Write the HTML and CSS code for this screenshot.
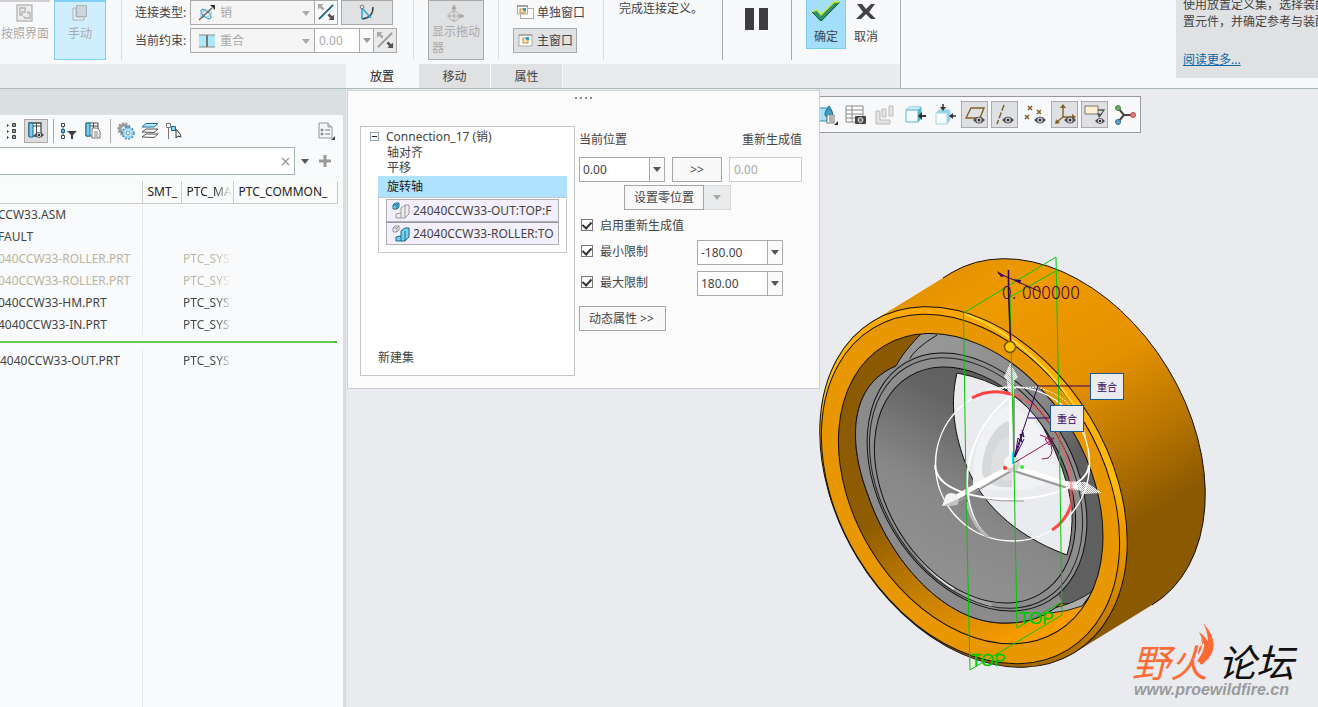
FILE: index.html
```html
<!DOCTYPE html>
<html lang="zh-CN">
<head>
<meta charset="utf-8">
<meta name="viewport" content="width=device-width, initial-scale=1">
<title>元件放置</title>
<link rel="stylesheet" href="styles.css">
</head>
<body>
<svg class="defs" aria-hidden="true">
  <defs>
    <symbol id="caret" viewBox="0 0 8 5"><path d="M0 0h8L4 5z" fill="currentColor"/></symbol>
    <symbol id="eye" viewBox="0 0 12 8"><path d="M0 4Q6-3 12 4Q6 11 0 4z" fill="#4b4b4d"/><circle cx="6" cy="4" r="2.6" fill="#e4e5e7"/><circle cx="6" cy="4" r="1.5" fill="#333"/></symbol>
    <symbol id="flip" viewBox="0 0 20 20"><path d="M2 17L17 2" stroke="currentColor" stroke-width="2"/><path d="M1 1h6L5 3l3 3-2 2-3-3-2 2z" fill="#aaa"/><path d="M18 18h-6l2-2-3-3 2-2 3 3 2-2z" class="flip-head"/></symbol>
  </defs>
</svg>

<header class="ribbon">
  <div class="ribbon-left">
    <div class="groups">
      <div class="group group-mode">
        <button class="big-btn muted-top" disabled>
          <svg width="18" height="18" viewBox="0 0 18 18" fill="none" stroke="#b3b3b3" stroke-width="1.3"><rect x="1" y="1" width="15" height="16" fill="#ececee"/><path d="M4 4h5v4H6v3H4zM8 14h6V9h-2V7M8 14v-2"/></svg>
          <span>按照界面</span>
        </button>
        <button class="big-btn picked" disabled>
          <svg width="18" height="18" viewBox="0 0 18 18"><path d="M2 4h3v9h8v3H2z" fill="#e8eef2" stroke="#aab2b8"/><rect x="5.500" y="1.500" width="10" height="11" fill="#ccd5da" stroke="#aab2b8"/></svg>
          <span>手动</span>
        </button>
      </div>
      <div class="group group-type">
        <div class="field-row">
          <label for="ctype">连接类型:</label>
          <div class="combo combo-icon">
            <svg class="lead" width="18" height="16" viewBox="0 0 18 16" fill="none"><ellipse cx="8" cy="9" rx="6" ry="3" transform="rotate(40 8 9)" stroke="#3aa0cc" stroke-width="1.300"/><ellipse cx="8" cy="9" rx="6" ry="3" transform="rotate(-15 8 9)" stroke="#a7c5d3"/><path d="M1 15L14 3" stroke="#666" stroke-width="1.500"/><path d="M17 0v5l-5-5z" fill="#333"/></svg>
            <select id="ctype" disabled><option>销</option></select>
            <svg class="caret" width="8" height="5"><use href="#caret"/></svg>
          </div>
          <button class="sq-btn flip-on" aria-label="反向"><svg width="19" height="19"><use href="#flip"/></svg></button>
          <button class="wide-btn" aria-label="曲线"><svg width="18" height="18" viewBox="0 0 18 18" fill="none"><path d="M15 3Q15 14 4 15" stroke="#444" stroke-width="1.500"/><path d="M4 15V4l9 10" stroke="#33a5dc" stroke-width="1.600"/><circle cx="4" cy="3" r="1.800" fill="#eee" stroke="#777"/></svg></button>
        </div>
        <div class="field-row">
          <label for="cons">当前约束:</label>
          <div class="combo combo-icon">
            <svg class="lead" width="18" height="14" viewBox="0 0 18 14"><path d="M1 1h16v12H1z" fill="#aee6fa"/><path d="M1 1h16M1 13h16" stroke="#888"/><path d="M9 1v12" stroke="#777" stroke-width="2"/></svg>
            <select id="cons" disabled><option>重合</option></select>
            <svg class="caret" width="8" height="5"><use href="#caret"/></svg>
          </div>
          <input class="offset" aria-label="偏移" value="0.00" disabled>
          <button class="drop-btn" aria-label="偏移列表" disabled><svg width="8" height="5"><use href="#caret"/></svg></button>
          <button class="sq-btn flip-off" aria-label="反向约束" disabled><svg width="19" height="19"><use href="#flip"/></svg></button>
        </div>
      </div>
      <div class="group group-drag">
        <button class="drag-btn" disabled>
          <svg width="18" height="18" viewBox="0 0 18 18" fill="none" stroke="#aaa"><circle cx="7" cy="11" r="5"/><path d="M7 2v15M0 11h15"/><path d="M7 0l2 4H5zM17 11l-4-2v4z" fill="#aaa"/></svg>
          <span>显示拖动器</span>
        </button>
      </div>
      <div class="group group-window">
        <button class="win-btn">
          <svg width="17" height="15" viewBox="0 0 17 15"><rect x="3.500" y="3.500" width="13" height="10" fill="#fff" stroke="#aaa"/><rect x=".5" y="1" width="10" height="8" fill="#fff" stroke="#aaa"/><path d="M0 1h11" stroke="#777"/><rect x="3" y="4" width="5" height="4" fill="#ffe6ae" stroke="#bb8a45"/><path d="M6 3h3v3H6z" fill="#2c9fc9"/></svg>
          <span>单独窗口</span>
        </button>
        <button class="win-btn on">
          <svg width="17" height="15" viewBox="0 0 17 15"><rect x="2" y="2" width="13" height="11" fill="#fff" stroke="#aaa"/><path d="M2 2h13" stroke="#888"/><rect x="6" y="5" width="5" height="5" fill="#ffe6ae" stroke="#bb8a45"/><path d="M9 4h3v3H9z" fill="#2c9fc9"/></svg>
          <span>主窗口</span>
        </button>
      </div>
      <div class="group group-status">完成连接定义。</div>
      <div class="group group-pause">
        <button class="plain" aria-label="暂停"><svg width="24" height="22" viewBox="0 0 24 22" fill="#3d3d3f"><path d="M0 0h9v22H0zM14 0h9v22h-9z"/></svg></button>
      </div>
      <div class="group group-done">
        <button class="done-btn ok">
          <svg width="30" height="22" viewBox="0 0 30 22"><path d="M1 12l5-2 4 5L24 2h5L11 21H9z" fill="#2e9368"/><path d="M1 12l5-2 4 5L23 2h5" fill="none" stroke="#d3ea27" stroke-width="1.300"/><path d="M1 12l9 9L28 3" fill="none" stroke="#24583e"/></svg>
          <span>确定</span>
        </button>
        <button class="done-btn">
          <svg width="30" height="22" viewBox="0 0 30 22"><path d="M6 4h5l4 5 5-5h4l-6 8 7 7h-5l-5-5-5 5H5l7-7z" fill="#434345"/></svg>
          <span>取消</span>
        </button>
      </div>
    </div>
    <nav class="tabs">
      <button class="tab active">放置</button>
      <button class="tab">移动</button>
      <button class="tab">属性</button>
    </nav>
  </div>
  <aside class="help">
    <p>使用放置定义集，选择装配<br>置元件，并确定参考与装配</p>
    <a href="#more">阅读更多...</a>
  </aside>
</header>

<main class="work">
  <section class="tree">
    <div class="tree-title"></div>
    <div class="tree-body">
      <div class="tree-tools">
        <button class="tool first" aria-label="列表"><svg width="16" height="18" viewBox="0 0 16 18"><path d="M9.500 1.500h3v3h-3zM9.500 7.500h3v3h-3zM9.500 13.500h3v3h-3z" fill="#999" stroke="#444"/><path d="M4 2v3l2-1.500zM4 8v3l2-1.500zM4 14v3l2-1.500z" fill="#333"/></svg></button>
        <button class="tool pressed" aria-label="树列"><svg width="18" height="18" viewBox="0 0 18 18"><path d="M2 1h12v13H2z" fill="#fff" stroke="#4a4a4a" stroke-width="1.300"/><path d="M2 4h12M9.500 1v13" stroke="#4a4a4a"/><path d="M2 1h4v14H2z" fill="#79cbef" stroke="#146c96"/><svg x="7" y="9" width="10" height="8"><use href="#eye"/></svg></svg></button>
        <i class="bar"></i>
        <button class="tool" aria-label="过滤器"><svg width="18" height="18" viewBox="0 0 18 18"><path d="M3 2v14" stroke="#555"/><path d="M1.500 1.500h3v3h-3zM1.500 13.500h3v3h-3z" fill="#fff" stroke="#444"/><path d="M1.500 7.500h3v3h-3z" fill="#5ac1ea" stroke="#146c96"/><path d="M7 9h10l-4 4v4h-2v-4z" fill="#3e3e40"/></svg></button>
        <button class="tool" aria-label="列设置"><svg width="18" height="18" viewBox="0 0 18 18"><path d="M2 1h12v13H2zM2 4h12M9.500 1v13" fill="#fff" stroke="#4a4a4a"/><path d="M2 1h4v13H2z" fill="#79cbef" stroke="#146c96"/><path d="M8 6h5l3 3v7H8z" fill="#f5f5f5" stroke="#777"/><path d="M10 10h4M10 12h4M10 14h4" stroke="#888"/></svg></button>
        <i class="bar"></i>
        <button class="tool" aria-label="设置"><svg width="18" height="18" viewBox="0 0 18 18" fill="none"><circle cx="7" cy="7" r="4" stroke="#999" stroke-width="3"/><circle cx="7" cy="7" r="5.800" stroke="#999" stroke-width="2" stroke-dasharray="2 1.500"/><circle cx="11" cy="11" r="4.500" fill="#dff4fd" stroke="#8fcdec" stroke-width="2"/><circle cx="11" cy="11" r="6" stroke="#3793bd" stroke-width="1.500" stroke-dasharray="2 1.500"/><circle cx="11" cy="11" r="2" fill="#fff" stroke="#3793bd"/></svg></button>
        <button class="tool" aria-label="层"><svg width="18" height="18" viewBox="0 0 18 18"><path d="M1 15l4-3h12l-4 3.500zM1 10l4-3h12l-4 3.500z" fill="#fff" stroke="#555"/><path d="M1 5l4-3.500h12L13 5z" fill="#b9e8fa" stroke="#1b7099"/></svg></button>
        <button class="tool" aria-label="选取"><svg width="18" height="18" viewBox="0 0 18 18"><path d="M3.500 5v12M6 6h3" stroke="#777" fill="none"/><path d="M1.500 1.500h4v4h-4z" fill="#fff" stroke="#777"/><path d="M6.500 4.500h4v4h-4z" fill="#8bd3f2" stroke="#146c96"/><path d="M11 7v9l2-2 3 1-1-3z" fill="#fff" stroke="#333"/></svg></button>
        <button class="tool last" aria-label="显示"><svg width="18" height="18" viewBox="0 0 18 18"><path d="M2 1h9l4 4v11H2z" fill="#f4f7f8" stroke="#8e9aa0"/><path d="M11 1v4h4" fill="#ccd3d6" stroke="#8e9aa0"/><path d="M8 8h5M8 12h5" stroke="#777"/><circle cx="5" cy="8" r="1" fill="none" stroke="#666"/><circle cx="5" cy="12" r="1" fill="none" stroke="#666"/><path d="M18 14v4h-4z" fill="#444"/></svg></button>
      </div>
      <div class="search">
        <div class="search-box">
          <input type="text" aria-label="搜索">
          <button class="plain" aria-label="清除"><svg width="9" height="9" viewBox="0 0 9 9"><path d="M1 1l7 7M8 1L1 8" stroke="#999" stroke-width="1.400"/></svg></button>
        </div>
        <button class="plain opt" aria-label="搜索选项"><svg width="8" height="5"><use href="#caret"/></svg></button>
        <button class="plain add" aria-label="添加"><svg width="12" height="12" viewBox="0 0 12 12"><path d="M6 0v12M0 6h12" stroke="#999" stroke-width="3"/></svg></button>
      </div>
      <table class="grid">
        <colgroup><col class="c1"><col class="c2"><col class="c3"><col class="c4"></colgroup>
        <thead><tr><th></th><th>SMT_</th><th class="fade">PTC_MA</th><th>PTC_COMMON_</th></tr></thead>
        <tbody>
          <tr><td>CCW33.ASM</td><td></td><td></td><td></td></tr>
          <tr><td>FAULT</td><td></td><td></td><td></td></tr>
          <tr class="dim"><td>040CCW33-ROLLER.PRT</td><td></td><td class="fade">PTC_SYST</td><td></td></tr>
          <tr class="dim"><td>040CCW33-ROLLER.PRT</td><td></td><td class="fade">PTC_SYST</td><td></td></tr>
          <tr><td>040CCW33-HM.PRT</td><td></td><td class="fade">PTC_SYST</td><td></td></tr>
          <tr><td>4040CCW33-IN.PRT</td><td></td><td class="fade">PTC_SYST</td><td></td></tr>
          <tr class="insert"><td colspan="4"><div class="insert-line"></div></td></tr>
          <tr class="flush"><td>4040CCW33-OUT.PRT</td><td></td><td class="fade">PTC_SYST</td><td></td></tr>
          <tr class="rest"><td></td><td></td><td></td><td></td></tr>
        </tbody>
      </table>
    </div>
  </section>

  <section class="view">
    <svg class="scene" viewBox="346 89 972 618" preserveAspectRatio="xMinYMin meet" role="img" aria-label="轴承模型">
      <defs>
        <linearGradient id="shell" gradientUnits="userSpaceOnUse" x1="951" y1="273" x2="1152" y2="605"><stop offset="0" stop-color="#e59300"/><stop offset=".12" stop-color="#ee9a00"/><stop offset=".4" stop-color="#e59200"/><stop offset=".62" stop-color="#b87500"/><stop offset=".8" stop-color="#8b5900"/><stop offset="1" stop-color="#8b5900"/></linearGradient>
        <linearGradient id="bore" gradientUnits="userSpaceOnUse" x1="870" y1="350" x2="1040" y2="640"><stop offset="0" stop-color="#8b5900"/><stop offset=".45" stop-color="#8f5c00"/><stop offset=".72" stop-color="#c98100"/><stop offset="1" stop-color="#ff9f00"/></linearGradient>
        <linearGradient id="ringIn" gradientUnits="userSpaceOnUse" x1="890" y1="400" x2="1000" y2="590"><stop offset="0" stop-color="#5c5c5c"/><stop offset=".25" stop-color="#646464"/><stop offset=".65" stop-color="#888"/><stop offset="1" stop-color="#919191"/></linearGradient>
        <linearGradient id="bearing" gradientUnits="userSpaceOnUse" x1="940" y1="340" x2="1080" y2="600"><stop offset="0" stop-color="#979797"/><stop offset=".35" stop-color="#888"/><stop offset=".55" stop-color="#5e5e5e"/><stop offset="1" stop-color="#606060"/></linearGradient>
        <linearGradient id="rim" gradientUnits="userSpaceOnUse" x1="873" y1="321" x2="1110" y2="600"><stop offset="0" stop-color="#ff9f00"/><stop offset=".25" stop-color="#ffb000"/><stop offset=".38" stop-color="#ffbe10"/><stop offset=".5" stop-color="#f09a00"/><stop offset="1" stop-color="#9a6200"/></linearGradient>
        <pattern id="dots" width="2" height="2" patternUnits="userSpaceOnUse"><path d="M0 0h2v2H0z" fill="#fff" fill-opacity=".5"/><path d="M0 0h1v1H0zM1 1h1v1H1z" fill="#fff"/></pattern>
        <clipPath id="hole"><ellipse cx="970.700" cy="488.700" rx="167" ry="117" transform="rotate(58.800 970.700 488.700)"/></clipPath>
      </defs>

      <path d="M873 321L951 273A194 136 58.800 0 1 1152 605L1074 653z" fill="url(#shell)"/>
      <path d="M943 278L951 273A194 136 58.800 0 1 1152 605" fill="none" stroke="#111"/>
      <ellipse cx="973.500" cy="487" rx="194" ry="136" transform="rotate(58.800 973.500 487)" fill="url(#rim)" stroke="#111"/>
      <ellipse cx="970.500" cy="489" rx="188" ry="132" transform="rotate(58.800 970.500 489)" fill="#e99700" stroke="#111"/>
      <path d="M965 314C1015 332 1060 378 1084 422" fill="none" stroke="#ffd836" stroke-width="2"/>

      <g clip-path="url(#hole)">
        <path d="M820 320h290v340H820z" fill="url(#bore)"/>
        <path d="M922 333C910 345 902 355 896 366C850 385 847 440 868 495C890 560 945 625 1007 623C1030 623 1048 615 1060 604L1110 602V330z" fill="url(#bearing)" stroke="#111"/>
        <path d="M937 335Q914 349 909 360" fill="none" stroke="#111"/>
        <path d="M1050 609Q1075 604 1094 590L1082 606Q1066 612 1050 613z" fill="#adadad" stroke="#222"/>
      </g>
      <path d="M896 366C850 385 847 440 868 495C890 560 945 625 1007 623C1030 623 1048 615 1062 602L1000 480L933 353Q910 356 896 366z" fill="#8b8b8b"/>
      <path d="M896 366C850 385 847 440 868 495C890 560 945 625 1007 623C1030 623 1048 615 1060 604" fill="none" stroke="#111"/>
      <ellipse cx="977" cy="482" rx="139" ry="97" transform="rotate(58.800 977 482)" fill="#8d8d8d" stroke="#111"/>
      <ellipse cx="976" cy="483" rx="135" ry="94" transform="rotate(58.800 976 483)" fill="none" stroke="#222"/>
      <path d="M895 520C920 568 955 595 992 605" fill="none" stroke="#a4a4a4" stroke-width="3"/>
      <path d="M905 537C918 560 936 577 954 589" fill="none" stroke="#eee" stroke-width="2"/>
      <ellipse cx="975" cy="485" rx="127" ry="89" transform="rotate(58.800 975 485)" fill="url(#ringIn)" stroke="#111"/>
      <ellipse cx="970.700" cy="488.700" rx="167" ry="117" transform="rotate(58.800 970.700 488.700)" fill="none" stroke="#111"/>

      <path d="M957 373C948 410 958 445 967 467C980 500 1012 535 1067 555Q1073 535 1072 508Q1067 470 1043 427Q1016 384 957 373z" fill="#e9ebee" stroke="#111"/>
      <path d="M973 485C972 440 990 410 1011 405Q1052 425 1059 478Q1030 492 1010 490Q985 492 973 485z" fill="#f1f2f4"/>
      <path d="M982 474C982 445 994 428 1007 421L1012 425V487Q990 489 982 474z" fill="#d7d8d9"/>
      <path d="M991 472C991 450 1000 438 1012 434V480Q998 482 991 472z" fill="#dfe0e1"/>

      <g fill="none" stroke="#999">
        <path d="M1014 464V397" stroke-width="2"/><path d="M1013 470L957 502M1014 471L1077 491" stroke-width="2"/>
        <path d="M978 498Q1000 502 1024 501"/>
      </g>
      <g fill="none" stroke="#fff">
        <circle cx="1012.500" cy="464" r="77" stroke-width="1.500"/>
        <path d="M935 465C936 490 976 499 1010 499C1052 499 1088 484 1089 465" stroke-width="2"/>
        <path d="M1010 397C984 417 967 450 967 483C968 508 975 526 987 536" stroke-width="2"/>
        <path d="M1011 464V397" stroke-width="4"/><path d="M1012 466L955 498" stroke-width="5"/><path d="M1014 467L1078 487" stroke-width="4"/>
        <path d="M987 389L1040 387M1040 388Q1080 400 1086 440" stroke-dasharray="2 1"/>
      </g>
      <path d="M967 502Q972 526 988 537" fill="none" stroke="#b5b5b5" stroke-width="3"/>
      <path d="M942 506L946 495Q951 491 957 495Q960 500 957 505z" fill="#f3f3f3"/><path d="M942 506L957 505Q959 502 958 499z" fill="#c4c4c4"/>
      <path d="M1010 363L1004 377L1007 381L1008 397H1014V381L1018 377zM1102 493L1086 482L1065 481L1066 488L1082 491L1081 494z" fill="url(#dots)"/>
      <circle cx="1012" cy="464" r="8" fill="#d2d2d2"/><circle cx="1010" cy="462" r="6" fill="#f6f6f6"/>
      <path d="M972 398Q990 388 1010 394M1071 505Q1066 521 1052 530" fill="none" stroke="#f44" stroke-width="3"/>
      <path d="M1010 394C1050 404 1075 455 1071 505" fill="none" stroke="#f55" stroke-width="3" stroke-dasharray="1 1"/>
      <circle cx="1005" cy="468" r="2" fill="#f33"/><circle cx="1022" cy="467" r="2" fill="#3e3"/><path d="M1013 452v12" stroke="#0ee" stroke-width="2"/>

      <g fill="none" stroke="#00c800" stroke-width="1">
        <path d="M963.500 313L1056 257L1059 410L1062 615L970 670L966 490z"/>
        <path d="M1056 271L1010 297L1014 467L1017 628L1062 602"/>
      </g>
      <g class="datum"><text x="1019" y="624">TOP</text><text x="971" y="666">TOP</text></g>

      <g fill="none" stroke="#36005e">
        <path d="M1008.500 270V292L1010.500 341" stroke-width="1.500"/><path d="M998 273L1041 292M1090 386H1038L1014 457M1050 418H1028"/>
        <path d="M1023 432L1016 455"/>
      </g>
      <path d="M997 271L1005 276L1001 277zM1013 279L1021 280L1020 284z" fill="#36005e"/>
      <path d="M1015 457L1018 438L1022 442L1020 434L1024 437L1022 430M1015 457L1024 439" fill="none" stroke="#36005e"/>
      <path d="M1014 463L1052 440M1045 439L1054 438L1049 445zM1040 435L1048 438Q1056 453 1048 458L1042 459" fill="none" stroke="#9c1459"/>
      <text class="dimension"><tspan x="1002" y="299">0.</tspan><tspan x="1022" y="299">000000</tspan></text>
      <circle cx="1010" cy="347" r="5.500" fill="#ffc800" stroke="#715600" stroke-width="1.500"/>
      <g class="tag"><rect x="1090.500" y="373.500" width="33" height="26"/><text x="1107" y="391">重合</text></g>
      <g class="tag"><rect x="1050.500" y="405.500" width="33" height="26"/><text x="1067" y="423">重合</text></g>

      <g class="brand"><text x="1132" y="677" class="fire">野火</text><text x="1218" y="677">论坛</text></g>
      <path d="M1203 623Q1216 637 1213 650Q1211 658 1202 664L1197 661Q1205 651 1204 643L1201 638Q1204 648 1198 655Q1198 646 1204 643L1199 632Q1205 636 1208 642Q1208 632 1203 623z" fill="#ff6a35"/>
      <text class="site" x="1134" y="695">www.proewildfire.cn</text>
    </svg>

    <div class="view-tools">
      <button aria-label="外观"><svg width="26" height="20" viewBox="0 0 26 20"><path d="M3 3h12v13H3z" fill="#a8e0f5" stroke="#2d8fb5"/><path d="M17 1q-7 9-2 11h4q4-3-2-11z" fill="#3d9fc4" stroke="#16698e"/><path d="M15 10h7v8h-7z" fill="#fff" stroke="#777"/><path d="M17 12h4M17 14h4M17 16h4" stroke="#666"/><path d="M26 16v4h-4z" fill="#333"/></svg></button>
      <button aria-label="视图管理"><svg width="22" height="22" viewBox="0 0 22 22"><path d="M2 2h17v16H2zM2 6h17M2 10h17M2 14h17M8 2v16" fill="#fff" stroke="#888"/><rect x="11" y="12" width="11" height="8" rx="1" fill="#444"/><circle cx="16.500" cy="16" r="2.500" fill="#777" stroke="#ddd"/></svg></button>
      <button aria-label="分解" disabled><svg width="22" height="22" viewBox="0 0 22 22" fill="#e4e4e5" stroke="#bbb"><path d="M2 7h4v9h10v4H2zM8 5h4v8H8zM15 2h4v10h-4z"/></svg></button>
      <button aria-label="消隐"><svg width="22" height="22" viewBox="0 0 22 22"><path d="M2 6l3-3h12v11l-3 4" fill="#52b8df" stroke="#5ab0ce"/><path d="M2 6l3-3h12l-3 3z" fill="#c8ecf8"/><path d="M2 6h12v12H2z" fill="#f7fdff" stroke="#5ab0ce"/><path d="M22 12h-5" stroke="#333" stroke-width="2"/><path d="M14 12l4-4v8z" fill="#333"/></svg></button>
      <button aria-label="样式"><svg width="22" height="22" viewBox="0 0 22 22"><path d="M2 9l3-3h11v10l-3 4" fill="#8bd5f0" stroke="#a9d4e3"/><path d="M2 9h11v11H2z" fill="#f7fdff" stroke="#a9d4e3"/><path d="M9 0v5M22 12h-4" stroke="#333" stroke-width="1.500"/><path d="M9 7L6 3h6zM15 12l4-3v6z" fill="#333"/></svg></button>
      <button class="on" aria-label="基准平面"><svg width="22" height="22" viewBox="0 0 22 22"><path d="M7 4h13l-4 10H2z" fill="none" stroke="#846226" stroke-width="1.400"/><svg x="9" y="12" width="12" height="8"><use href="#eye"/></svg></svg></button>
      <button class="on" aria-label="基准轴"><svg width="22" height="22" viewBox="0 0 22 22"><path d="M10 1L3 20" stroke="#846226" stroke-width="1.500" stroke-dasharray="6 2"/><svg x="8" y="12" width="12" height="8"><use href="#eye"/></svg></svg></button>
      <button aria-label="基准点"><svg width="22" height="22" viewBox="0 0 22 22"><path d="M4 2l4 4m0-4L4 6M13 6l4 4m0-4l-4 4M1 11l4 4m0-4l-4 4" stroke="#846226" stroke-width="1.500"/><svg x="10" y="12" width="12" height="8"><use href="#eye"/></svg></svg></button>
      <button class="on" aria-label="坐标系"><svg width="22" height="22" viewBox="0 0 22 22"><path d="M9 3v10h10M9 13l-6 5" stroke="#846226" stroke-width="1.400" fill="none"/><path d="M9 0l3 4H6zM22 13l-4 3v-6zM1 20l1-5 4 4z" fill="#846226"/><svg x="10" y="12" width="12" height="8"><use href="#eye"/></svg></svg></button>
      <button class="on" aria-label="注释"><svg width="22" height="22" viewBox="0 0 22 22"><path d="M1 2h13v8H1z" fill="#ffefd4" stroke="#777"/><path d="M14 6h6l-4 6" fill="none" stroke="#555" stroke-width="1.300"/><path d="M13 9l5 1-3 4z" fill="#555"/><svg x="11" y="13" width="10" height="8"><use href="#eye"/></svg></svg></button>
      <button aria-label="旋转中心"><svg width="22" height="22" viewBox="0 0 22 22"><path d="M4 4l6 7h8M10 11l-6 7" fill="none" stroke="#444" stroke-width="2"/><circle cx="4" cy="4" r="2.500" fill="#6daa63" stroke="#4b8243"/><circle cx="19" cy="11" r="2.500" fill="#ee7777" stroke="#b94a4a"/><circle cx="4" cy="18" r="2.500" fill="#5aa2d0" stroke="#2f6f99"/></svg></button>
    </div>

    <div class="placement">
      <div class="grip"><i></i><i></i><i></i><i></i></div>
      <div class="place-body">
        <div class="sets">
          <div class="set-head"><button class="toggle" aria-label="折叠"></button><span>Connection_17 (销)</span></div>
          <ul class="set-items"><li>轴对齐</li><li>平移</li></ul>
          <div class="selected">旋转轴</div>
          <div class="refs">
            <button class="ref"><svg width="18" height="18" viewBox="0 0 18 18"><path d="M1 3l2-2h4v4L5 7H1z" fill="#66c8ec" stroke="#1e7499"/><path d="M1 3h4v4M5 3l2-2" fill="none" stroke="#1e7499"/><path d="M4 16v-4l5-1V6l4-3h4v9l-4 4zM9 11v5M13 3v13" fill="#eee" stroke="#999"/></svg><span>24040CCW33-OUT:TOP:F</span></button>
            <button class="ref"><svg width="18" height="18" viewBox="0 0 18 18"><path d="M1 3l2-2h4v4L5 7H1z" fill="#eee" stroke="#999"/><path d="M1 3h4v4M5 3l2-2" fill="none" stroke="#999"/><path d="M4 16v-4l5-1V6l4-3h4v9l-4 4zM9 11v5M13 6v10" fill="#79d2f2" stroke="#14688d"/></svg><span>24040CCW33-ROLLER:TO</span></button>
          </div>
          <button class="new-set">新建集</button>
        </div>

        <form class="limits">
          <div class="titles"><label for="cur">当前位置</label><label for="regen">重新生成值</label></div>
          <div class="line values">
            <div class="num"><input id="cur" value="0.00"><button type="button" aria-label="当前位置列表"><svg width="8" height="5"><use href="#caret"/></svg></button></div>
            <button type="button" class="btn copy">&gt;&gt;</button>
            <input class="regen" id="regen" value="0.00" disabled>
          </div>
          <div class="line zero"><button type="button" class="btn">设置零位置</button><button type="button" class="btn-drop" aria-label="零位置选项" disabled><svg width="8" height="5"><use href="#caret"/></svg></button></div>
          <div class="line check wide"><input type="checkbox" id="en" checked><label for="en">启用重新生成值</label></div>
          <div class="line limit">
            <div class="check"><input type="checkbox" id="mn" checked><label for="mn">最小限制</label></div>
            <div class="num"><input aria-label="最小值" value="-180.00"><button type="button" aria-label="最小值列表"><svg width="8" height="5"><use href="#caret"/></svg></button></div>
          </div>
          <div class="line limit">
            <div class="check"><input type="checkbox" id="mx" checked><label for="mx">最大限制</label></div>
            <div class="num"><input aria-label="最大值" value="180.00"><button type="button" aria-label="最大值列表"><svg width="8" height="5"><use href="#caret"/></svg></button></div>
          </div>
          <button type="button" class="btn dynamic">动态属性 &gt;&gt;</button>
        </form>
      </div>
    </div>
  </section>
</main>
</body>
</html>
```
FILE: styles.css
```css
* { box-sizing: border-box; }
html, body { height: 100%; }
body {
  margin: 0;
  display: flex;
  flex-direction: column;
  overflow: hidden;
  background: #e9ebee;
  color: #444;
  font: 12px/17px "Noto Sans", "Noto Sans CJK SC", sans-serif;
}
button, input, select { font: inherit; color: inherit; margin: 0; padding: 0; border-radius: 0; }
button { background: none; border: 0; display: flex; align-items: center; justify-content: center; }
svg { display: block; flex: none; }
.defs { position: absolute; width: 0; height: 0; }

/* Ribbon */
.ribbon { display: flex; justify-content: space-between; background: #f8f9fb; border-bottom: 1px solid #aab8ba; }
.ribbon-left { display: flex; flex-direction: column; width: 901px; border-right: 1px solid #b0b0b2; }
.groups { display: flex; height: 64px; overflow: hidden; }
.group { display: flex; border-right: 1px solid #dcdde0; height: 60px; }
.group-mode { width: 122px; gap: 4px; }
.big-btn { flex-direction: column; justify-content: flex-start; gap: 3px; padding-top: 4px; color: #aaa; width: 52px; }
.muted-top { width: 50px; border-top: 2px solid #d0d0d2; padding-top: 2px; white-space: nowrap; }
.picked { background: #cfefff; border: 1px solid #7fd0f8; border-top-width: 2px; padding-top: 2px; }
.group-type { width: 292px; flex-direction: column; gap: 3px; padding-left: 13px; }
.field-row { display: flex; height: 25px; }
.field-row label { width: 55px; line-height: 25px; white-space: nowrap; }
.combo { position: relative; display: flex; align-items: center; width: 125px; border: 1px solid #aaa; background: #f5f5f6; color: #aaa; }
.combo .lead { margin-left: 7px; }
.combo select { appearance: none; flex: 1; min-width: 0; border: 0; background: none; padding-left: 4px; opacity: 1; color: #aaa; }
.combo .caret { position: absolute; right: 4px; top: 10px; pointer-events: none; }
.sq-btn { width: 23px; border: 1px solid #aaa; border-left: 0; background: #f8f9fb; }
.flip-on { color: #1a6484; }
.flip-head { fill: #555; }
.flip-off { background: #e9eaec; color: #999; }
.wide-btn { width: 52px; margin-left: 3px; border: 1px solid #aaa; background: #e0e1e3; }
.offset { width: 45px; border: 1px solid #aaa; border-left: 0; background: #fff; padding-left: 4px; color: #aaa; font-size: 12px; }
.drop-btn { width: 14px; border: 1px solid #aaa; border-left: 0; color: #999; }
.group-drag { width: 85px; padding-left: 14px; }
.drag-btn { width: 56px; flex-direction: column; gap: 1px; border: 1px solid #aaa; background: #e0e1e3; color: #aaa; padding: 0 3px; line-height: 16px; text-align: left; }
.group-window { width: 105px; padding-left: 14px; flex-direction: column; gap: 3px; align-items: flex-start; }
.win-btn { height: 25px; gap: 3px; padding: 0 3px; border: 1px solid transparent; white-space: nowrap; }
.win-btn.on { background: #e0e1e3; border-color: #aaa; }
.group-status { width: 119px; padding-left: 15px; border-color: #aaa; white-space: nowrap; }
.group-pause { width: 69px; justify-content: center; align-items: flex-start; padding-top: 8px; border-color: #aaa; }
.group-done { border: 0; padding-left: 14px; align-items: flex-start; }
.done-btn { flex-direction: column; width: 40px; height: 49px; gap: 6px; border: 0; justify-content: flex-start; }
.done-btn.ok { background: #a3dffc; border: 1px solid #76cdf8; border-top: 0; }
.tabs { display: flex; height: 24px; padding-left: 346px; background: #e9ebed; }
.tab { width: 72px; background: #dfe1e3; border-right: 1px solid #f8f9fb; }
.tab.active { background: #f8f9fb; color: #222; width: 73px; }
.help { width: 142px; height: 78px; background: #e0e1e3; padding-left: 7px; overflow: hidden; white-space: nowrap; }
.help p { margin: -4px 0 21px; }
.help a { color: #0b66a5; }

/* Work area */
.work { flex: 1; display: flex; min-height: 0; }
.tree { width: 346px; display: flex; flex-direction: column; background: #dadfdf; border-right: 1px solid #d5d8da; flex: none; }
.tree-title { height: 26px; }
.tree-body { flex: 1; min-height: 0; margin-right: 2px; background: #f8fafb; display: flex; flex-direction: column; padding-right: 5px; }
.tree-tools { display: flex; align-items: center; height: 32px; }
.tool { width: 24px; height: 24px; }
.tool.first { padding-right: 3px; }
.tool.pressed { background: #dddee1; border: 1px solid #aaa; }
.tool.last { margin-left: auto; }
.bar { width: 1px; height: 24px; margin: 0 3px 0 5px; background: #aaa; }
.search { display: flex; align-items: center; height: 28px; }
.search-box { display: flex; width: 295px; height: 28px; border: 1px solid #a4b4b4; border-left: 0; background: #fff; }
.search-box input { flex: 1; min-width: 0; border: 0; background: none; outline: 0; }
.search-box .plain { width: 18px; }
.opt { width: 20px; color: #555; }
.add { width: 20px; }
.grid { flex: 1; margin-top: 6px; width: 337px; table-layout: fixed; border-collapse: collapse; font-size: 12px; }
.c1 { width: 142px; } .c2 { width: 39px; } .c3 { width: 52px; } .c4 { width: 104px; }
.grid th, .grid td { padding: 0; height: 22px; font-weight: 400; text-align: left; white-space: nowrap; overflow: hidden; }
.grid th { color: #222; padding-left: 5px; background: #fafbfb; border-right: 1px solid #ccc; border-bottom: 1px solid #ccc; }
.grid td:first-child { border-right: 1px solid #e9eaec; text-indent: -2px; }
.grid .flush td:first-child { text-indent: 0; }
.grid td:nth-child(3) { padding-left: 2px; }
.grid .fade { color: transparent; background: linear-gradient(90deg, #444 70%, #f8fafb 98%) text; }
.grid th.fade { background-image: linear-gradient(90deg, #222 65%, #f8fafb 98%); }
.grid .dim { color: #bdb49c; }
.grid .dim .fade { background-image: linear-gradient(90deg, #bdb49c 70%, #f8fafb 98%); }
.grid .insert td { height: 14px; border: 0; }
.insert-line { height: 2px; background: #66c94a; border-right: 2px solid #3eae30; }
.grid .rest td { height: auto; }

/* Graphics view */
.view { position: relative; flex: 1; min-width: 0; overflow: hidden; }
.scene { width: 100%; height: auto; }
.datum text { font: 17px "Liberation Sans", sans-serif; fill: #00c800; stroke: #00c800; stroke-width: .4px; }
.dimension { font: 300 18px "Noto Sans CJK SC", sans-serif; fill: #4a0040; }
.tag rect { fill: #e9ebee; stroke: #175c99; stroke-width: 1; }
.tag text { font: 10px "Noto Sans CJK SC", sans-serif; fill: #36005e; text-anchor: middle; }
.brand text { font: italic 400 38px "Noto Sans CJK SC", sans-serif; fill: #111; }
.brand .fire { fill: #ff6a35; }
.site { font: italic bold 16px "Liberation Sans", sans-serif; fill: #9b9b9d; }
.view-tools { position: absolute; left: 462px; top: 7px; display: flex; gap: 3px; align-items: center; padding: 4px 2px; border: 1px solid #999; background: #f8f9fb; }
.view-tools button { width: 27px; height: 27px; border: 1px solid transparent; }
.view-tools .on { background: #dfe0e3; border-color: #aaa; }

/* Placement panel */
.placement { position: absolute; left: 1px; top: 1px; width: 473px; background: #fbfbfb; border: 1px solid #ccced0; padding-bottom: 12px; }
.grip { display: flex; justify-content: center; gap: 3px; height: 35px; padding-top: 6px; }
.grip i { width: 2px; height: 2px; background: #888; }
.place-body { display: flex; gap: 4px; padding: 0 17px 0 12px; }
.sets { display: flex; flex-direction: column; width: 215px; height: 250px; padding: 1px 7px 9px 9px; border: 1px solid #c3c5c9; background: #fff; }
.set-head { display: flex; align-items: center; gap: 7px; }
.toggle { width: 9px; height: 9px; border: 1px solid #8aa2bd; }
.toggle::before { content: ""; width: 5px; height: 1px; background: #222; }
.set-items { list-style: none; margin: 0; padding: 0 0 1px 17px; line-height: 15px; }
.selected { margin-left: 8px; padding-left: 9px; line-height: 21px; background: #afe2ff; color: #222; }
.refs { display: flex; flex-direction: column; margin-left: 8px; padding: 1px 7px 7px; border: 1px solid #c3c5c9; }
.ref { height: 23px; padding: 0 0 0 5px; gap: 3px; justify-content: flex-start; overflow: hidden; border: 1px solid #b0b0b4; background: #f4effc; white-space: nowrap; }
.ref + .ref { border-top-color: #999; }
.new-set { margin: auto 0 0 8px; align-self: flex-start; }
.limits { flex: 1; display: flex; flex-direction: column; gap: 3px; }
.titles { display: flex; justify-content: space-between; height: 28px; padding-top: 5px; }
.line { display: flex; align-items: center; height: 25px; }
.values { justify-content: space-between; }
.num { display: flex; width: 86px; height: 25px; border: 1px solid #aaa; background: #fff; }
.num input { flex: 1; min-width: 0; padding-left: 3px; border: 0; background: none; }
.num button { width: 15px; border-left: 1px solid #aaa; background: #fafafa; color: #555; }
.btn { height: 25px; padding: 0 9px; border: 1px solid #a6a6a8; background: #f8f8f8; white-space: nowrap; }
.copy { width: 50px; }
.regen { width: 73px; height: 25px; padding-left: 4px; border: 1px solid #ccc; background: #fdfdfd; color: #aaa; }
.zero { padding-left: 45px; }
.btn-drop { width: 27px; height: 25px; border: 1px solid #d5d7d9; border-left: 0; background: #e9ebed; color: #aaa; }
.check { display: flex; align-items: center; gap: 7px; padding-left: 2px; }
.check.wide { height: 24px; }
.check input { appearance: none; width: 12px; height: 12px; border: 1px solid #777; background: #fff; display: grid; place-items: center; }
.check input:checked::after { content: ""; width: 4px; height: 7px; margin-bottom: 2px; border: solid #333; border-width: 0 2px 2px 0; transform: rotate(42deg); }
.limit { justify-content: space-between; padding-right: 19px; margin-bottom: 3px; }
.limit .check { padding-bottom: 3px; }
.dynamic { align-self: flex-start; margin-top: 4px; padding: 0 11px 0 9px; }
```
